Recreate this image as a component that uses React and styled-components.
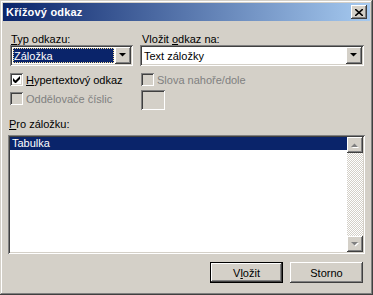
import styled, { createGlobalStyle } from "styled-components";

const GlobalStyle = createGlobalStyle`
  html, body {
    margin: 0;
    padding: 0;
    background: #d4d0c8;
  }
  body {
    font-family: "Liberation Sans", Arial, sans-serif;
    font-size: 11px;
    color: #000;
  }
`;

const face = "#d4d0c8";

const raised = `
  box-shadow: inset -1px -1px #404040, inset 1px 1px #fff,
    inset -2px -2px #808080, inset 2px 2px ${face};
`;

const sunken = `
  box-shadow: inset 1px 1px #808080, inset -1px -1px #fff,
    inset 2px 2px #404040, inset -2px -2px ${face};
`;

const Window = styled.div`
  width: 373px;
  height: 295px;
  box-sizing: border-box;
  padding: 3px;
  background: ${face};
  box-shadow: inset -1px -1px #404040, inset 1px 1px ${face},
    inset -2px -2px #808080, inset 2px 2px #fff;
  display: flex;
  flex-direction: column;
`;

const TitleBar = styled.div`
  height: 18px;
  background: linear-gradient(to right, #0a246a, #a6caf0);
  display: flex;
  align-items: center;
  justify-content: space-between;
  padding: 0 3px 0 3px;
`;

const Title = styled.span`
  color: #fff;
  font-weight: bold;
  font-size: 11px;
  letter-spacing: 0.2px;
`;

const CloseButton = styled.div`
  width: 16px;
  height: 14px;
  background: ${face};
  ${raised}
  display: flex;
  align-items: center;
  justify-content: center;
`;

const Body = styled.div`
  padding: 12px 6px 0 7px;
  display: flex;
  flex-direction: column;
`;

const Top = styled.div`
  display: grid;
  grid-template-columns: 123px 224px;
  column-gap: 7px;
`;

const Column = styled.div`
  display: flex;
  flex-direction: column;
`;

const Label = styled.div`
  line-height: 12px;
  height: 12px;
  margin-left: ${(p) => p.$indent || 0}px;
  white-space: nowrap;
`;

const U = styled.span`
  text-decoration: underline;
  text-underline-offset: 1px;
`;

const Combo = styled.div`
  height: 21px;
  box-sizing: border-box;
  padding: 2px;
  background: #fff;
  ${sunken}
  display: flex;
  margin-bottom: 7px;
`;

const ComboValue = styled.div`
  flex: 1;
  margin: 1px;
  padding: 0 1px;
  display: flex;
  align-items: center;
  white-space: nowrap;
  ${(p) =>
    p.$selected
      ? `background: #0a246a; color: #fff; outline: 1px dotted #f5db95; outline-offset: -1px;`
      : `color: #000;`}
`;

const ArrowButton = styled.div`
  width: 16px;
  height: ${(p) => p.$h || 17}px;
  background: ${face};
  ${raised}
  display: flex;
  align-items: center;
  justify-content: center;
  flex-shrink: 0;
`;

const CheckRow = styled.div`
  display: flex;
  align-items: center;
  height: 13px;
  gap: 3px;
  margin-bottom: ${(p) => p.$mb || 0}px;
  color: ${(p) => (p.$disabled ? "#808080" : "#000")};
  white-space: nowrap;
`;

const Box = styled.div`
  width: 13px;
  height: 13px;
  box-sizing: border-box;
  background: ${(p) => (p.$disabled ? face : "#fff")};
  ${sunken}
  display: flex;
  align-items: center;
  justify-content: center;
  flex-shrink: 0;
`;

const SpinField = styled.div`
  width: 24px;
  height: 20px;
  background: ${face};
  ${sunken}
`;

const ListLabel = styled(Label)`
  margin-top: 8px;
  margin-left: -1px;
`;

const ListBox = styled.div`
  margin: 5px -1px 0 -2px;
  height: 119px;
  box-sizing: border-box;
  padding: 2px;
  background: #fff;
  ${sunken}
  display: flex;
`;

const Items = styled.div`
  flex: 1;
`;

const Item = styled.div`
  height: 13px;
  line-height: 13px;
  padding-left: 2px;
  background: ${(p) => (p.$selected ? "#0a246a" : "transparent")};
  color: ${(p) => (p.$selected ? "#fff" : "#000")};
`;

const ScrollBar = styled.div`
  width: 16px;
  display: flex;
  flex-direction: column;
  justify-content: space-between;
  background-color: #fff;
  background-image: repeating-conic-gradient(${face} 0 25%, #fff 0 50%);
  background-size: 2px 2px;
`;

const Footer = styled.div`
  display: flex;
  justify-content: flex-end;
  gap: 7px;
  margin-top: 8px;
  margin-right: 1px;
`;

const Button = styled.div`
  width: 73px;
  height: 21px;
  box-sizing: border-box;
  background: ${face};
  display: flex;
  align-items: center;
  justify-content: center;
  ${(p) =>
    p.$default
      ? `box-shadow: inset 0 0 0 1px #000, inset -2px -2px #404040, inset 2px 2px #fff,
    inset -3px -3px #808080, inset 3px 3px ${face};`
      : raised}
`;

const DownArrow = ({ disabled }) => (
  <svg width="8" height="5" viewBox="0 0 8 5">
    {disabled && <path d="M1 1h7L4.5 4.5z" fill="#fff" />}
    <path d="M0 0h7L3.5 3.5z" fill={disabled ? "#808080" : "#000"} />
  </svg>
);

const UpArrow = () => (
  <svg width="8" height="5" viewBox="0 0 8 5">
    <path d="M1 5h7L4.5 1.5z" fill="#fff" />
    <path d="M0 4h7L3.5 0.5z" fill="#808080" />
  </svg>
);

const Check = () => (
  <svg width="7" height="7" viewBox="0 0 7 7">
    <path d="M0 2v3l2 2h1l4-4V0L2.5 4.5z" fill="#000" />
  </svg>
);

const CloseX = () => (
  <svg width="8" height="7" viewBox="0 0 8 7">
    <path d="M0 0l8 7M8 0L0 7" stroke="#000" strokeWidth="1.6" />
  </svg>
);

export default function App() {
  return (
    <>
      <GlobalStyle />
      <Window>
        <TitleBar>
          <Title>Křížový odkaz</Title>
          <CloseButton>
            <CloseX />
          </CloseButton>
        </TitleBar>
        <Body>
          <Top>
            <Column>
              <Label $indent={1}>
                <U>T</U>yp odkazu:
              </Label>
              <Combo>
                <ComboValue $selected>Záložka</ComboValue>
                <ArrowButton>
                  <DownArrow />
                </ArrowButton>
              </Combo>
              <CheckRow $mb={6}>
                <Box>
                  <Check />
                </Box>
                <span>
                  <U>H</U>ypertextový odkaz
                </span>
              </CheckRow>
              <CheckRow $disabled>
                <Box $disabled />
                <span>Oddělovače číslic</span>
              </CheckRow>
            </Column>
            <Column>
              <Label $indent={2}>
                Vložit <U>o</U>dkaz na:
              </Label>
              <Combo>
                <ComboValue>Text záložky</ComboValue>
                <ArrowButton>
                  <DownArrow />
                </ArrowButton>
              </Combo>
              <CheckRow $disabled $mb={4} style={{ marginLeft: 1 }}>
                <Box $disabled />
                <span>Slova nahoře/dole</span>
              </CheckRow>
              <SpinField style={{ marginLeft: 1 }} />
            </Column>
          </Top>
          <ListLabel>
            <U>P</U>ro záložku:
          </ListLabel>
          <ListBox>
            <Items>
              <Item $selected>Tabulka</Item>
            </Items>
            <ScrollBar>
              <ArrowButton $h={16}>
                <UpArrow />
              </ArrowButton>
              <ArrowButton $h={16}>
                <DownArrow disabled />
              </ArrowButton>
            </ScrollBar>
          </ListBox>
          <Footer>
            <Button $default>
              <span>
                V<U>l</U>ožit
              </span>
            </Button>
            <Button>Storno</Button>
          </Footer>
        </Body>
      </Window>
    </>
  );
}
